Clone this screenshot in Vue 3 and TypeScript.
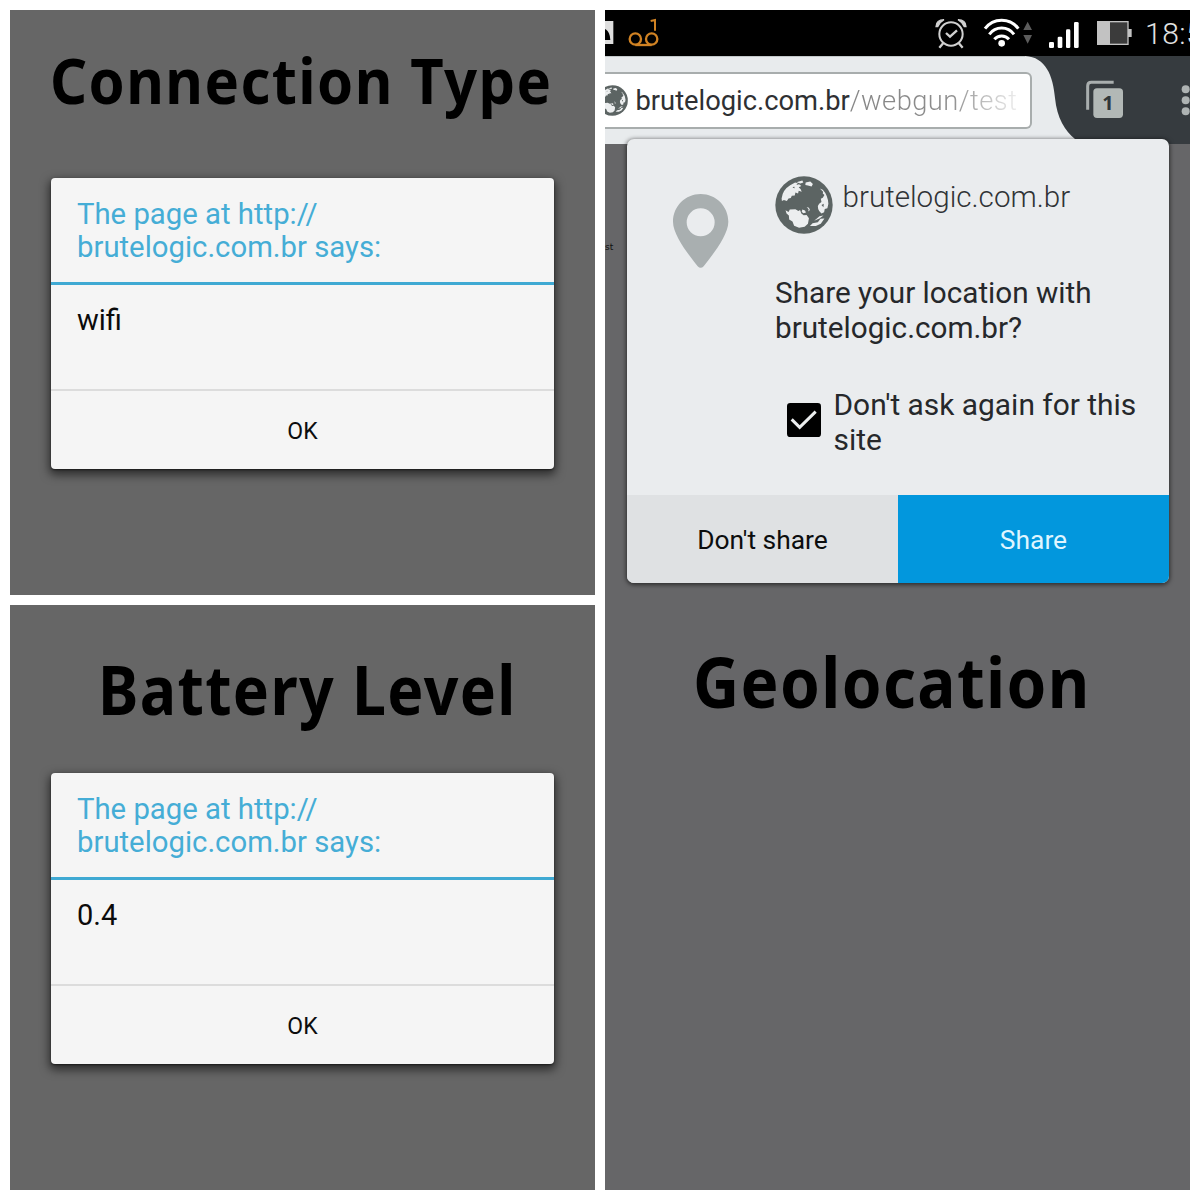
<script setup lang="ts">
interface AlertPanel {
  id: string
  title: string
  message: string
}

const alerts: AlertPanel[] = [
  { id: 'connection', title: 'Connection Type', message: 'wifi' },
  { id: 'battery', title: 'Battery Level', message: '0.4' },
]
</script>

<template>
  <main class="collage">
    <div class="column">
      <section v-for="a in alerts" :key="a.id" class="panel" :class="a.id">
        <h1 class="title"><span>{{ a.title }}</span></h1>
        <div class="alert">
          <header class="alert-head">The page at http://<br />brutelogic.com.br says:</header>
          <p class="alert-body">{{ a.message }}</p>
          <button class="alert-ok">OK</button>
        </div>
      </section>
    </div>

    <section class="panel phone">
      <div class="status">
        <svg class="s-image" viewBox="15 30 30 138">
          <rect x="0" y="63" width="40" height="69" fill="#dedede" />
          <path d="M0 88H17Q30 96 31 120H0Z" fill="#000" />
        </svg>
        <svg class="s-voice" viewBox="81 30 99 138">
          <g fill="none" stroke="#d08223" stroke-width="7">
            <circle cx="106" cy="117" r="17" /><circle cx="155" cy="117" r="17" />
            <path d="M106 135H155" />
            <path d="M152 63L165 60V92" stroke-width="6" />
          </g>
        </svg>
        <span class="spacer"></span>
        <svg class="s-alarm" viewBox="105 30 96 138">
          <g fill="none" stroke="#d0d0d0" stroke-width="6">
            <circle cx="153" cy="102" r="35" />
            <path d="M138 99L150 110L171 91" stroke-width="7" />
            <path d="M130 129L118 143M176 129L188 143" stroke-width="7" />
          </g>
          <path d="M108 80Q109 59 132 59Q119 66 113 80ZM198 80Q197 59 174 59Q187 66 193 80Z" fill="#d0d0d0" stroke="#d0d0d0" stroke-width="4" />
        </svg>
        <svg class="s-wifi" viewBox="249 30 150 138">
          <g fill="none" stroke="#fff" stroke-width="9">
            <path d="M255 86A62 62 0 0 1 355 86" />
            <path d="M268 103A46 46 0 0 1 342 103" />
            <path d="M283 118A29 29 0 0 1 327 118" />
          </g>
          <circle cx="305" cy="130" r="10" fill="#fff" />
          <path d="M370 90H396L383 65ZM370 105H396L383 131Z" fill="#5c5c5c" />
        </svg>
        <svg class="s-signal" viewBox="444 30 96 138">
          <g fill="#fff">
            <rect x="447" y="126" width="15" height="18" rx="4" />
            <rect x="473" y="110" width="14" height="34" rx="4" />
            <rect x="498" y="88" width="13" height="56" rx="4" />
            <rect x="522" y="66" width="14" height="78" rx="4" />
          </g>
        </svg>
        <svg class="s-battery" viewBox="588 30 111 138">
          <rect x="593" y="65" width="91" height="68" fill="#3b3b3b" stroke="#c2c2c2" stroke-width="4" />
          <rect x="592" y="65" width="38" height="69" fill="#c2c2c2" />
          <rect x="684" y="87" width="11" height="24" fill="#c2c2c2" />
        </svg>
        <span class="time">18:5</span>
      </div>

      <div class="toolbar">
        <svg class="tab-shape" viewBox="605 56 585 88">
          <path d="M605 56H1025C1046 57 1053 76 1055 98C1057 118 1065 131 1075 139L1082 144H605Z" fill="#e8ebed" />
          <path d="M605 56.5H1025" stroke="#c3c8ca" />
        </svg>
        <div class="url">
          <svg class="globe small" viewBox="43 48 176 176"><use href="#globe-art" /></svg>
          <span class="host">brutelogic.com.br</span><span class="path">/webgun/test</span>
        </div>
        <svg class="tabs" viewBox="555 168 117 264">
          <path d="M563 329V258Q563 247 574 247H641" fill="none" stroke="#a9aeae" stroke-width="9" />
          <rect x="580" y="265" width="89" height="89" rx="11" fill="#b2b8b6" />
          <text x="624" y="331" text-anchor="middle">1</text>
        </svg>
        <svg class="more" viewBox="843 168 27 264">
          <g fill="#aeb3b3">
            <circle cx="857" cy="268" r="12" /><circle cx="857" cy="301" r="12" /><circle cx="857" cy="334" r="12" />
          </g>
        </svg>
      </div>

      <div class="web"><span class="stray">st</span></div>

      <div class="popup">
        <div class="popup-main">
          <svg class="pin" viewBox="186 189 171 228">
            <path fill-rule="evenodd" fill="#a9afb0" d="M272 192C318 192 355 229 355 275C355 315 309 373 281 409Q272 418 263 409C235 373 189 315 189 275C189 229 226 192 272 192ZM272 235A42 42 0 1 0 272 319A42 42 0 1 0 272 235Z" />
          </svg>
          <div class="popup-text">
            <div class="site">
              <svg class="globe" viewBox="43 48 176 176">
                <g id="globe-art">
                  <circle cx="131" cy="136" r="87" fill="#5c6463" />
                  <g fill="#eceeef">
                    <path d="M64 124L63 116Q66 90 89 76L104 68L112 70L108 75L116 73L123 78L115 82L121 88L124 96L115 93L113 101L105 98L103 107L94 108L91 115L84 116L79 124L70 121Z" />
                    <path d="M108 67L126 62L129 68L120 71ZM136 68L150 65L158 72L154 80L143 77L135 75Z" />
                    <path d="M179 86L188 90Q203 106 205 132L202 146L194 148L192 158L184 162L177 154L174 148L173 139L177 132L184 127L182 117L188 114L193 106L188 101L189 96Z" />
                    <path d="M75 152L84 157L88 150L105 149L114 154L119 151L123 162L130 167L139 166L146 176L143 193L133 202L116 205L101 199L96 186L86 180L85 168L78 162Z" />
                    <path d="M149 200L157 191L173 188L181 178L193 177L182 193L167 200ZM126 150L134 153L137 159L130 161L124 157ZM139 142L146 144L149 151L144 156L145 149Z" />
                    <path d="M162 184L178 170L190 168L178 177Z" />
                  </g>
                  <path d="M96 84L101 80L103 85ZM184 136L191 132L190 143Z" fill="#5c6463" />
                </g>
              </svg>
              <span>brutelogic.com.br</span>
            </div>
            <p class="question">Share your location with<br />brutelogic.com.br?</p>
            <label class="remember">
              <svg class="check" viewBox="531 99 102 102">
                <rect x="531" y="99" width="102" height="102" rx="10" />
                <path d="M545 148L569 172L617 125" fill="none" stroke="#eceeef" stroke-width="9" />
              </svg>
              <span>Don't ask again for this<br />site</span>
            </label>
          </div>
        </div>
        <div class="actions">
          <button class="deny">Don't share</button>
          <button class="share">Share</button>
        </div>
      </div>

      <h1 class="title"><span>Geolocation</span></h1>
    </section>
  </main>
</template>

<style>
body { margin: 0; background: #fff; }
</style>

<style scoped>
* { box-sizing: border-box; }
.collage {
  width: 1200px; height: 1200px; padding: 10px; display: flex; gap: 10px;
  font-family: Roboto, "Liberation Sans", sans-serif; background: #fff;
}
.column { width: 585px; display: flex; flex-direction: column; gap: 10px; }
.panel { position: relative; width: 585px; height: 585px; background: #666; overflow: hidden; }
button { border: 0; margin: 0; padding: 0; background: none; font-family: inherit; color: #0c0d0e; }
p { margin: 0; }
svg { display: block; flex: none; }

.title {
  margin: 0; font: 700 62px/80px "Noto Sans", sans-serif; color: #000; white-space: nowrap;
  letter-spacing: 1.5px;
}
.title span { display: inline-block; transform-origin: 0 50%; transform: scaleX(.935); }
.connection .title { height: 168px; padding: 30px 0 0 40px; }
.battery .title { height: 168px; padding: 44px 0 0 88px; font-size: 68px; }
.battery .title span { transform: scaleX(.893); }
.phone .title { padding: 59px 0 0 88px; font-size: 70px; line-height: 84px; }
.phone .title span { transform: scaleX(.912); }

.alert {
  width: 503px; height: 291px; margin-left: 41px; display: flex; flex-direction: column;
  background: #f5f5f5; border-radius: 4px;
  box-shadow: 0 4px 10px 2px rgba(0, 0, 0, .55), 0 1px 2px rgba(0, 0, 0, .5);
}
.alert-head {
  height: 107px; padding: 20px 0 0 26px; border-bottom: 3px solid #3fa9d3;
  font-size: 29.3px; line-height: 33.4px; color: #45add6; white-space: nowrap;
}
.alert-body { height: 104px; padding: 18px 0 0 26px; font-size: 29px; line-height: 34px; color: #0b0b0b; }
.alert-ok { flex: 1; border-top: 2px solid #dcdcdc; font-size: 23px; padding-top: 2px; }

.phone { height: 1180px; background: #666668; display: flex; flex-direction: column; }
.status { height: 46px; display: flex; background: #000; flex: none; }
.status svg { height: 46px; }
.s-image { width: 10px; }
.s-voice { width: 33px; margin-left: 12px; }
.spacer { width: 275px; flex: none; }
.s-alarm { width: 32px; }
.s-wifi { width: 50px; margin-left: 16px; }
.s-signal { width: 32px; margin-left: 15px; }
.s-battery { width: 37px; margin-left: 16px; }
.time { margin-left: 12px; font-size: 30px; font-weight: 300; line-height: 47px; color: #e2e2e2; letter-spacing: .5px; }

.toolbar { position: relative; height: 88px; flex: none; display: flex; background: #363b3f; }
.tab-shape { position: absolute; inset: 0; width: 585px; height: 88px; }
.url {
  position: relative; width: 428px; height: 57px; margin: 16px 53px 0 0; display: flex; align-items: center;
  background: #fff; border: 2px solid #a8adad; border-left: 0; border-radius: 0 6px 6px 0;
  font-size: 27.3px; white-space: nowrap; overflow: hidden;
}
.globe { width: 58px; height: 58px; }
.globe.small { width: 31px; height: 31px; margin: 0 8px 0 -8.5px; }
.host { color: #2e3033; }
.path {
  font-weight: 300; letter-spacing: .45px; color: transparent;
  background: linear-gradient(90deg, #858585 0%, #8d8d8d 60%, #ededed 100%); background-clip: text;
}
.tabs { position: relative; width: 39px; height: 88px; margin-right: 57px; }
.tabs text { font: 700 60px "Noto Sans", sans-serif; fill: #30373a; }
.more { position: relative; width: 9px; height: 88px; }

.web { height: 436px; flex: none; }
.stray { display: block; padding-top: 97px; font: 9px/12px "DejaVu Sans", sans-serif; color: #111; }

.popup {
  position: absolute; left: 22px; top: 129px; width: 542px; height: 444px;
  display: flex; flex-direction: column; border-radius: 7px; background: #eaecee; overflow: hidden;
  box-shadow: 0 1px 4px 1px rgba(0, 0, 0, .55);
}
.popup-main { height: 356px; display: flex; padding-left: 45px; }
.pin { width: 57px; height: 76px; margin: 54px 46px 0 0; }
.popup-text { white-space: nowrap; }
.site { display: flex; height: 58px; margin-top: 37px; gap: 9.5px; font-size: 29.6px; font-weight: 300; line-height: 42px; color: #303336; }
.question { margin-top: 41px; font-size: 29.7px; line-height: 35px; color: #26282b; }
.remember { display: flex; margin: 42px 0 0 12px; gap: 12.5px; font-size: 29.9px; line-height: 35px; color: #26282b; }
.check { width: 34px; height: 34px; margin-top: 16px; }
.actions { height: 88px; display: flex; }
.actions button { width: 271px; font-size: 26.4px; padding-top: 2px; }
.actions .deny { background: #dfe1e3; }
.actions .share { background: #0297dd; color: #dff5ff; }
</style>
